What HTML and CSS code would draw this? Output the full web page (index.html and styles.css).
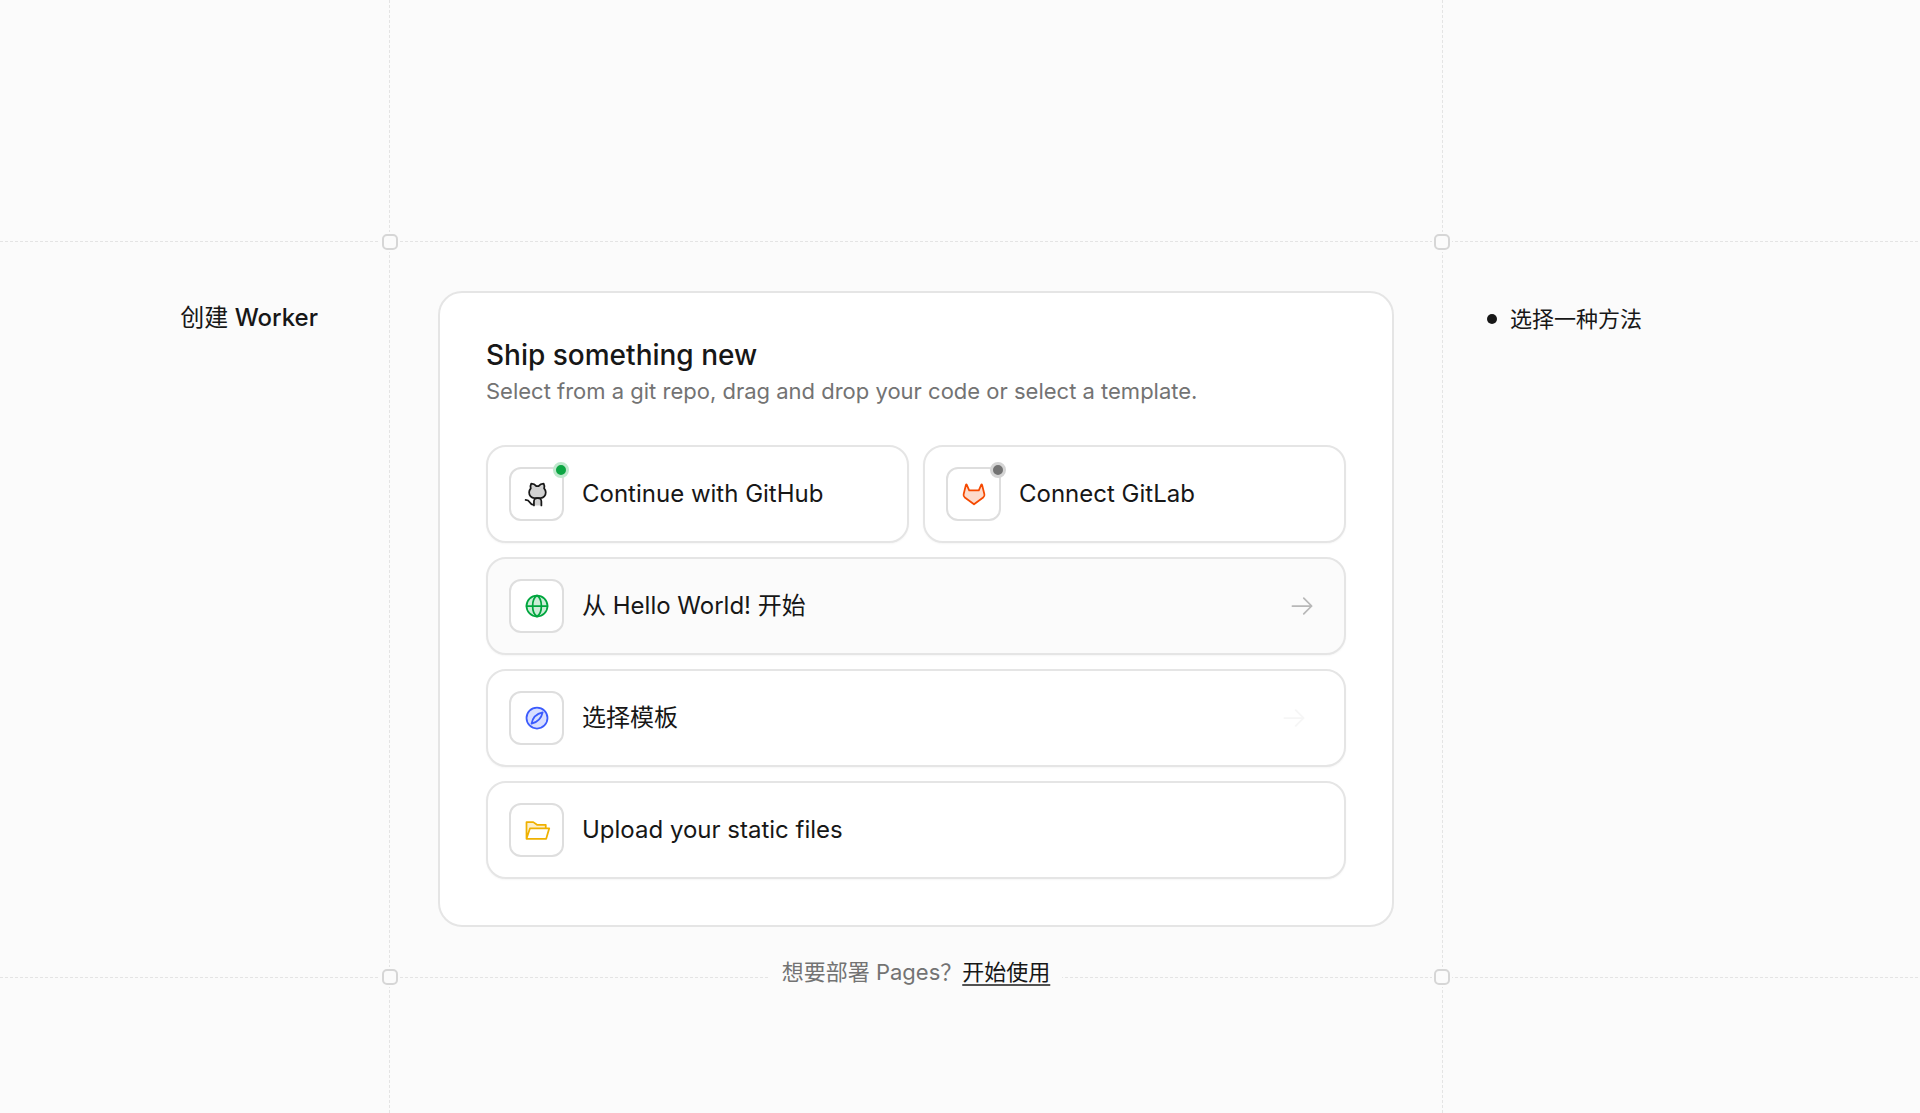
FILE: index.html
```html
<!DOCTYPE html>
<html lang="zh-CN">
<head>
  <meta charset="UTF-8" />
  <meta name="viewport" content="width=device-width, initial-scale=1" />
  <title>创建 Worker</title>
  <link rel="stylesheet" href="styles.css">
</head>
<body>
  <div class="page">

    <!-- dashed guides -->
    <div class="guide-rows" aria-hidden="true"></div>
    <div class="guide-cols" aria-hidden="true"></div>

    <header class="side-title">
      <h1><span class="regular">创建</span> Worker</h1>
    </header>

    <main class="content">
      <span class="node top left"></span>
      <span class="node top right"></span>
      <span class="node bottom left"></span>
      <span class="node bottom right"></span>

      <section class="card">
        <h2>Ship something new</h2>
        <p class="subtitle">Select from a git repo, drag and drop your code or select a template.</p>

        <div class="options">
          <button type="button" class="option">
            <span class="icon-box github">
              <svg viewBox="0 0 256 256">
                <path class="tint" d="M122 56C110 40 94 32 76 32C68 46 66 62 71 77C60 90 56 98 56 112A48 52 0 0 0 104 162H112Q100 172 100 190V232H168V190Q168 172 156 162H160A48 52 0 0 0 208 112C208 98 204 90 193 77C198 62 196 46 188 32C170 32 154 40 142 56Z"/>
                <path d="M122 56C110 40 94 32 76 32C68 46 66 62 71 77C60 90 56 98 56 112A48 52 0 0 0 104 166H160A48 52 0 0 0 208 112C208 98 204 90 193 77C198 62 196 46 188 32C170 32 154 40 142 56Z"/>
                <path d="M100 232V196A32 30 0 0 1 132 166H136A32 30 0 0 1 168 196V232M100 224H88C62 224 68 182 24 182"/>
              </svg>
              <span class="status connected"></span>
            </span>
            <span class="label">Continue with GitHub</span>
          </button>

          <button type="button" class="option">
            <span class="icon-box gitlab">
              <svg viewBox="0 0 256 256">
                <path class="tint" d="M84 94H172L198 40L224 136L216 158L128 222L40 158L32 136L58 40Z"/>
                <path d="M84 94H172L194 44Q199 36 202 46L223 130Q227 149 212 160L128 222L44 160Q29 149 33 130L54 46Q57 36 62 44Z"/>
              </svg>
              <span class="status"></span>
            </span>
            <span class="label">Connect GitLab</span>
          </button>

          <button type="button" class="option wide active">
            <span class="icon-box globe">
              <svg viewBox="0 0 256 256">
                <circle class="tint" cx="128" cy="128" r="96"/>
                <circle cx="128" cy="128" r="96"/>
                <path d="M88 128C88 174 106 210 128 224C150 210 168 174 168 128S150 46 128 32C106 46 88 82 88 128ZM32 128H224"/>
              </svg>
            </span>
            <span class="label">从 Hello World! 开始</span>
            <svg class="arrow" viewBox="0 0 256 256"><path d="M40 128H216M144 56L216 128L144 200"/></svg>
          </button>

          <button type="button" class="option wide">
            <span class="icon-box compass">
              <svg viewBox="0 0 256 256">
                <circle class="tint" cx="128" cy="128" r="96"/>
                <circle cx="128" cy="128" r="96"/>
                <path d="M180 76C124 88 88 120 78 180C132 168 168 130 180 76Z"/>
              </svg>
            </span>
            <span class="label">选择模板</span>
            <svg class="arrow resting" viewBox="0 0 256 256"><path d="M40 128H216M144 56L216 128L144 200"/></svg>
          </button>

          <button type="button" class="option wide">
            <span class="icon-box folder">
              <svg viewBox="0 0 256 256">
                <path class="tint" d="M32 208V56H96L128 80H208V112H64Z"/>
                <path d="M32 208V56H94L128 80H208V112M32 208L64 112H240L212 208Z"/>
              </svg>
            </span>
            <span class="label">Upload your static files</span>
          </button>
        </div>
      </section>

      <p class="pages-note">想要部署 Pages？<a href="#">开始使用</a></p>
    </main>

    <nav class="steps" aria-label="步骤">
      <ol>
        <li><span class="dot"></span>选择一种方法</li>
      </ol>
    </nav>

  </div>
</body>
</html>
```
FILE: styles.css
```css
* {
  box-sizing: border-box;
}

body {
  margin: 0;
  background: #fbfbfb;
  color: #171717;
  font-family: Inter, "Noto Sans CJK SC", sans-serif;
  font-size: 22px;
  line-height: 32px;
}

h1, h2, p, ol {
  margin: 0;
  padding: 0;
}

.page {
  display: grid;
  grid-template-columns: 390px minmax(0, 1fr) 478px;
  grid-template-rows: 242px auto 1fr;
  min-height: 100vh;
}

/* dashed guides */
.guide-rows {
  grid-area: 2 / 1 / 3 / 4;
  margin: -1px 0;
  background:
    repeating-linear-gradient(90deg, #e4e4e4 0 3px, transparent 3px 5px) top / 100% 1px no-repeat,
    repeating-linear-gradient(90deg, #e4e4e4 0 3px, transparent 3px 5px) bottom / 100% 1px no-repeat;
}

.guide-cols {
  grid-area: 1 / 2 / 4 / 3;
  margin: 0 -1px;
  background:
    repeating-linear-gradient(#e4e4e4 0 3px, transparent 3px 5px) left / 1px 100% no-repeat,
    repeating-linear-gradient(#e4e4e4 0 3px, transparent 3px 5px) right / 1px 100% no-repeat;
}

.node {
  position: absolute;
  width: 16px;
  height: 16px;
  border: 2px solid #d6d6d6;
  border-radius: 5px;
  background: #fbfbfb;
  box-shadow: 0 0 0 2px #fbfbfb;
}

.node.top { top: -8px; }
.node.bottom { bottom: -8px; }
.node.left { left: -8px; }
.node.right { right: -8px; }

/* side columns */
.side-title {
  grid-area: 2 / 1;
  padding: 60px 72px 0 0;
  text-align: right;
}

.side-title h1 {
  font-size: 24px;
  font-weight: 500;
}

.regular {
  font-weight: 400;
}

.steps {
  grid-area: 2 / 3;
  padding: 61px 0 0 45px;
}

.steps ol {
  list-style: none;
}

.steps li {
  display: flex;
  align-items: center;
  gap: 13px;
}

.dot {
  width: 10px;
  height: 10px;
  border-radius: 50%;
  background: #171717;
}

/* card */
.content {
  grid-area: 2 / 2;
  position: relative;
  padding: 49px 48px 0;
}

.card {
  padding: 46px;
  border: 2px solid #e5e5e5;
  border-radius: 24px;
  background: #fff;
}

.card h2 {
  font-size: 28px;
  font-weight: 500;
}

.subtitle {
  margin: 4px 0 38px;
  color: #737373;
}

.options {
  display: grid;
  grid-template-columns: 1fr 1fr;
  gap: 14px;
}

.option {
  display: flex;
  align-items: center;
  gap: 18px;
  padding: 20px 28px 20px 21px;
  border: 2px solid #e5e5e5;
  border-radius: 20px;
  background: #fff;
  color: inherit;
  font: inherit;
  font-size: 24px;
  text-align: left;
  box-shadow: 0 1px 2px rgba(0, 0, 0, 0.04);
  cursor: pointer;
}

.option.wide {
  grid-column: span 2;
}

.option.active,
.option:hover {
  background: #fbfbfb;
}

.icon-box {
  position: relative;
  display: flex;
  align-items: center;
  justify-content: center;
  width: 55px;
  height: 54px;
  border: 2px solid #dedede;
  border-radius: 12px;
  background: #fff;
}

svg {
  width: 28px;
  height: 28px;
  fill: none;
  stroke: currentColor;
  stroke-width: 16;
  stroke-linecap: round;
  stroke-linejoin: round;
}

.tint {
  fill: currentColor;
  stroke: none;
  opacity: 0.2;
}

.github { color: #171717; }
.gitlab { color: #f54900; }
.globe { color: #00a63e; }
.compass { color: #3b5bfd; }
.folder { color: #efb100; }

.status {
  position: absolute;
  top: -7px;
  right: -7px;
  width: 16px;
  height: 16px;
  border: 3px solid #d4d4d4;
  border-radius: 50%;
  background: #737373;
}

.status.connected {
  border-color: #bfe8cd;
  background: #0ca643;
}

.arrow {
  margin-left: auto;
  color: #b8b8b8;
}

.arrow.resting {
  margin-right: 8px;
  opacity: 0.12;
}

/* note on the lower guide */
.pages-note {
  position: relative;
  width: fit-content;
  margin: 29px auto -11px;
  padding: 0 12px;
  background: #fbfbfb;
  color: #737373;
}

.pages-note a {
  color: #171717;
  text-decoration: underline;
  text-decoration-color: #525252;
  text-decoration-thickness: 2px;
  text-underline-offset: 4px;
}
```
